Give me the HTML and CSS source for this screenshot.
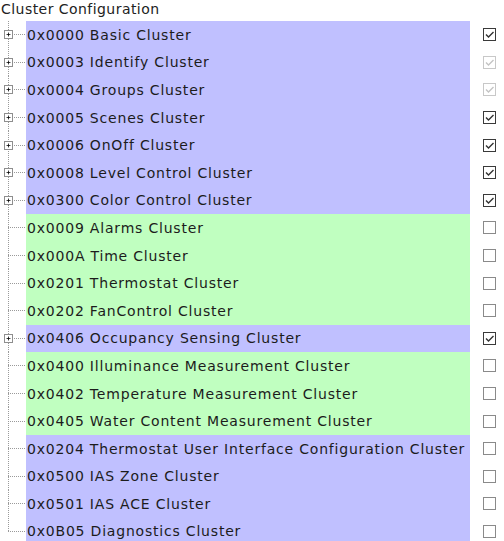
FILE: index.html
```html
<!DOCTYPE html>
<html>
<head>
<meta charset="utf-8">
<link rel="stylesheet" href="styles.css">
</head>
<body>
<div class="title">Cluster Configuration</div>
<ul class="tree">
  <li class="row"><span class="conn"><span class="plus"><svg viewBox="0 0 9 9" width="9" height="9"><path d="M2 4.5h5M4.5 2v5" stroke="#000" stroke-width="1"/></svg></span></span><span class="label server">0x0000 Basic Cluster</span><span class="check on"><svg viewBox="0 0 11 11" width="11" height="11"><path d="M2 5.5l2.5 2.5L9.5 3" fill="none" stroke-width="1.4"/></svg></span></li>
  <li class="row"><span class="conn"><span class="plus"><svg viewBox="0 0 9 9" width="9" height="9"><path d="M2 4.5h5M4.5 2v5" stroke="#000" stroke-width="1"/></svg></span></span><span class="label server">0x0003 Identify Cluster</span><span class="check on disabled"><svg viewBox="0 0 11 11" width="11" height="11"><path d="M2 5.5l2.5 2.5L9.5 3" fill="none" stroke-width="1.4"/></svg></span></li>
  <li class="row"><span class="conn"><span class="plus"><svg viewBox="0 0 9 9" width="9" height="9"><path d="M2 4.5h5M4.5 2v5" stroke="#000" stroke-width="1"/></svg></span></span><span class="label server">0x0004 Groups Cluster</span><span class="check on disabled"><svg viewBox="0 0 11 11" width="11" height="11"><path d="M2 5.5l2.5 2.5L9.5 3" fill="none" stroke-width="1.4"/></svg></span></li>
  <li class="row"><span class="conn"><span class="plus"><svg viewBox="0 0 9 9" width="9" height="9"><path d="M2 4.5h5M4.5 2v5" stroke="#000" stroke-width="1"/></svg></span></span><span class="label server">0x0005 Scenes Cluster</span><span class="check on"><svg viewBox="0 0 11 11" width="11" height="11"><path d="M2 5.5l2.5 2.5L9.5 3" fill="none" stroke-width="1.4"/></svg></span></li>
  <li class="row"><span class="conn"><span class="plus"><svg viewBox="0 0 9 9" width="9" height="9"><path d="M2 4.5h5M4.5 2v5" stroke="#000" stroke-width="1"/></svg></span></span><span class="label server">0x0006 OnOff Cluster</span><span class="check on"><svg viewBox="0 0 11 11" width="11" height="11"><path d="M2 5.5l2.5 2.5L9.5 3" fill="none" stroke-width="1.4"/></svg></span></li>
  <li class="row"><span class="conn"><span class="plus"><svg viewBox="0 0 9 9" width="9" height="9"><path d="M2 4.5h5M4.5 2v5" stroke="#000" stroke-width="1"/></svg></span></span><span class="label server">0x0008 Level Control Cluster</span><span class="check on"><svg viewBox="0 0 11 11" width="11" height="11"><path d="M2 5.5l2.5 2.5L9.5 3" fill="none" stroke-width="1.4"/></svg></span></li>
  <li class="row"><span class="conn"><span class="plus"><svg viewBox="0 0 9 9" width="9" height="9"><path d="M2 4.5h5M4.5 2v5" stroke="#000" stroke-width="1"/></svg></span></span><span class="label server">0x0300 Color Control Cluster</span><span class="check on"><svg viewBox="0 0 11 11" width="11" height="11"><path d="M2 5.5l2.5 2.5L9.5 3" fill="none" stroke-width="1.4"/></svg></span></li>
  <li class="row"><span class="conn leaf"></span><span class="label client">0x0009 Alarms Cluster</span><span class="check"></span></li>
  <li class="row"><span class="conn leaf"></span><span class="label client">0x000A Time Cluster</span><span class="check"></span></li>
  <li class="row"><span class="conn leaf"></span><span class="label client">0x0201 Thermostat Cluster</span><span class="check"></span></li>
  <li class="row"><span class="conn leaf"></span><span class="label client">0x0202 FanControl Cluster</span><span class="check"></span></li>
  <li class="row"><span class="conn"><span class="plus"><svg viewBox="0 0 9 9" width="9" height="9"><path d="M2 4.5h5M4.5 2v5" stroke="#000" stroke-width="1"/></svg></span></span><span class="label server">0x0406 Occupancy Sensing Cluster</span><span class="check on"><svg viewBox="0 0 11 11" width="11" height="11"><path d="M2 5.5l2.5 2.5L9.5 3" fill="none" stroke-width="1.4"/></svg></span></li>
  <li class="row"><span class="conn leaf"></span><span class="label client">0x0400 Illuminance Measurement Cluster</span><span class="check"></span></li>
  <li class="row"><span class="conn leaf"></span><span class="label client">0x0402 Temperature Measurement Cluster</span><span class="check"></span></li>
  <li class="row"><span class="conn leaf"></span><span class="label client">0x0405 Water Content Measurement Cluster</span><span class="check"></span></li>
  <li class="row"><span class="conn leaf"></span><span class="label server">0x0204 Thermostat User Interface Configuration Cluster</span><span class="check"></span></li>
  <li class="row"><span class="conn leaf"></span><span class="label server">0x0500 IAS Zone Cluster</span><span class="check"></span></li>
  <li class="row"><span class="conn leaf"></span><span class="label server">0x0501 IAS ACE Cluster</span><span class="check"></span></li>
  <li class="row last"><span class="conn leaf"></span><span class="label server">0x0B05 Diagnostics Cluster</span><span class="check"></span></li>
</ul>
</body>
</html>
```
FILE: styles.css
```css
html, body {
  margin: 0;
  padding: 0;
  background: #ffffff;
}
body {
  font-family: "DejaVu Sans", Verdana, sans-serif;
  font-size: 14px;
  letter-spacing: 0.8px;
  color: #1c1c1c;
}
.title {
  height: 21px;
  line-height: 19px;
  padding-left: 1px;
  letter-spacing: 0.45px;
  color: #222;
}
.tree {
  list-style: none;
  margin: 0;
  padding: 0;
}
.row {
  display: flex;
  align-items: center;
  height: 27.6px;
}
.conn {
  width: 26px;
  height: 100%;
  flex: none;
  display: flex;
  align-items: center;
  background-image:
    repeating-linear-gradient(to bottom, #9a9a9a 0 1px, transparent 1px 2px),
    repeating-linear-gradient(to right, #9a9a9a 0 1px, transparent 1px 2px);
  background-size: 1px 100%, 18px 1px;
  background-position: 8px 0, 8px 50%;
  background-repeat: no-repeat;
}
.last .conn {
  background-size: 1px 50%, 18px 1px;
}
.plus {
  margin-left: 4px;
  width: 9px;
  height: 9px;
  box-sizing: border-box;
  border: 1px solid #8e8e8e;
  background: #fff;
  display: flex;
  align-items: center;
  justify-content: center;
}
.plus svg {
  display: block;
  width: 7px;
  height: 7px;
}
.label {
  width: 444px;
  height: 100%;
  flex: none;
  display: flex;
  align-items: center;
  padding-left: 1px;
  box-sizing: border-box;
  white-space: nowrap;
}
.server { background: #c0c0ff; }
.client { background: #c0ffc0; }
.check {
  margin-left: 13px;
  width: 13px;
  height: 13px;
  box-sizing: border-box;
  border: 1px solid #8a8a8a;
  background: #fff;
  flex: none;
  display: flex;
  align-items: center;
  justify-content: center;
}
.check svg { display: block; }
.check.on { border-color: #3a3a3a; }
.check.on svg path { stroke: #333; }
.check.disabled { border-color: #c8c8c8; }
.check.disabled svg path { stroke: #c4c4c4; }
```
